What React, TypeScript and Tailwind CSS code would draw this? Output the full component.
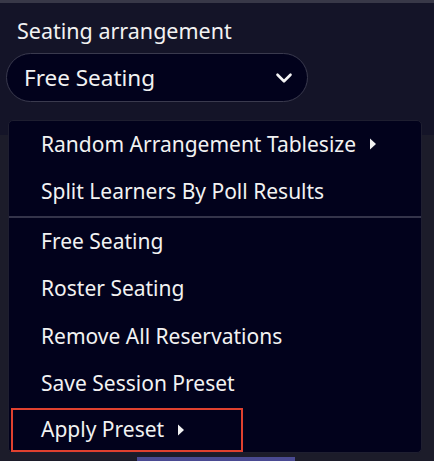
import React from "react";
import { ChevronDown } from "lucide-react";

const Caret = () => (
  <svg width="8" height="12" viewBox="0 0 8 12" className="ml-[13px] shrink-0">
    <path d="M1 0.5 L7 6 L1 11.5 Z" fill="#f2f2f2" />
  </svg>
);

const items = [
  { label: "Random Arrangement Tablesize", sub: true },
  { label: "Split Learners By Poll Results", sep: true },
  { label: "Free Seating" },
  { label: "Roster Seating" },
  { label: "Remove All Reservations" },
  { label: "Save Session Preset" },
];

const App = () => {
  return (
    <div
      className="w-[434px] h-[461px] overflow-hidden flex flex-col bg-[#141428] text-[#f2f2f2]"
      style={{ fontFamily: "'Noto Sans', 'Open Sans', sans-serif" }}
    >
      <div className="h-[3px] bg-[#383848] shrink-0" />

      <div className="px-[6px] pt-[15px] shrink-0">
        <div className="pl-[11px] text-[21.5px] leading-[26px]">Seating arrangement</div>
        <div className="mt-[9px] w-[302px] h-[49px] rounded-full border border-[#3a3a4e] bg-[#02021c] flex items-center justify-between pl-[17px] pr-[10px]">
          <span className="text-[22.5px]">Free Seating</span>
          <ChevronDown size={26} strokeWidth={2.4} color="#f4f4f4" />
        </div>
      </div>

      <div className="relative flex-1 mt-[18px]">
        <div className="absolute left-0 right-0 top-[15px] bottom-0 bg-[#1c1c2a]" />
        <div className="absolute left-[137px] w-[158px] bottom-0 h-[4px] bg-[#4a4a92]" />
        <div className="relative ml-[8px] w-[414px] rounded-[5px] border border-[#1e1e30] bg-[#02021c] flex flex-col">
          {items.map((it) => (
            <React.Fragment key={it.label}>
              <div className="h-[47.5px] flex items-center pl-[32px] text-[21px] pb-[1px]">
                <span>{it.label}</span>
                {it.sub && <Caret />}
              </div>
              {it.sep && <div className="h-[2px] bg-[#34344a]" />}
            </React.Fragment>
          ))}
          <div className="ml-[2px] w-[232px] h-[44px] border-2 border-[#e0412f] flex items-center pl-[28px] text-[21px]">
            <span>Apply Preset</span>
            <Caret />
          </div>
        </div>
      </div>
    </div>
  );
};

export default App;
